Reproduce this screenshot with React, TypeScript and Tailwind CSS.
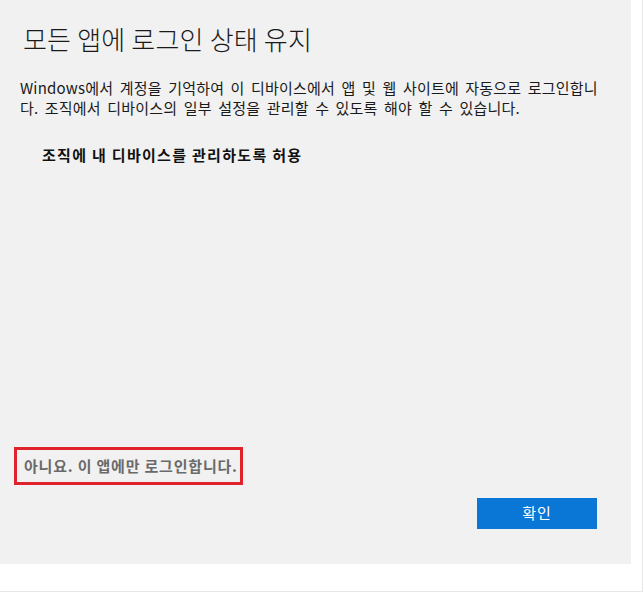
export default function App() {
  const font = { fontFamily: '"Noto Sans CJK KR", "Noto Sans", sans-serif' }
  return (
    <div className="w-[643px] h-[592px] bg-white border-r border-b border-[#e6e6e6]" style={font}>
      <div className="w-[631px] h-[564px] bg-[#f1f1f1] flex flex-col">
        {/* header */}
        <h1 className="pl-[23px] pt-[22px] text-[26px] leading-[34px] font-light text-[#1a1a1a] tracking-[0.2px]">
          모든 앱에 로그인 상태 유지
        </h1>

        {/* description */}
        <p className="pl-[20px] pt-[22px] text-[15px] leading-[20px] text-[#1a1a1a] tracking-[0.2px] [word-spacing:2.9px] whitespace-nowrap">
          Windows에서 계정을 기억하여 이 디바이스에서 앱 및 웹 사이트에 자동으로 로그인합니
          <br />
          다. 조직에서 디바이스의 일부 설정을 관리할 수 있도록 해야 할 수 있습니다.
        </p>

        <p className="pl-[42px] pt-[27px] text-[15px] leading-[20px] font-semibold text-[#111] tracking-[1.3px]">
          조직에 내 디바이스를 관리하도록 허용
        </p>

        <div className="flex-1" />

        {/* highlighted link */}
        <div className="ml-[14px] w-[229px] h-[38px] border-[3px] border-[#e0222c] flex items-center pl-[7px]">
          <span className="text-[15px] font-semibold text-[#6a6a6a] whitespace-nowrap tracking-[0.8px]">아니요. 이 앱에만 로그인합니다.</span>
        </div>

        <div className="flex justify-end pr-[34px] pt-[13px] pb-[35px]">
          <button className="w-[120px] h-[31px] bg-[#0a76d5] text-white text-[15px] tracking-[1px]">확인</button>
        </div>
      </div>
    </div>
  )
}
